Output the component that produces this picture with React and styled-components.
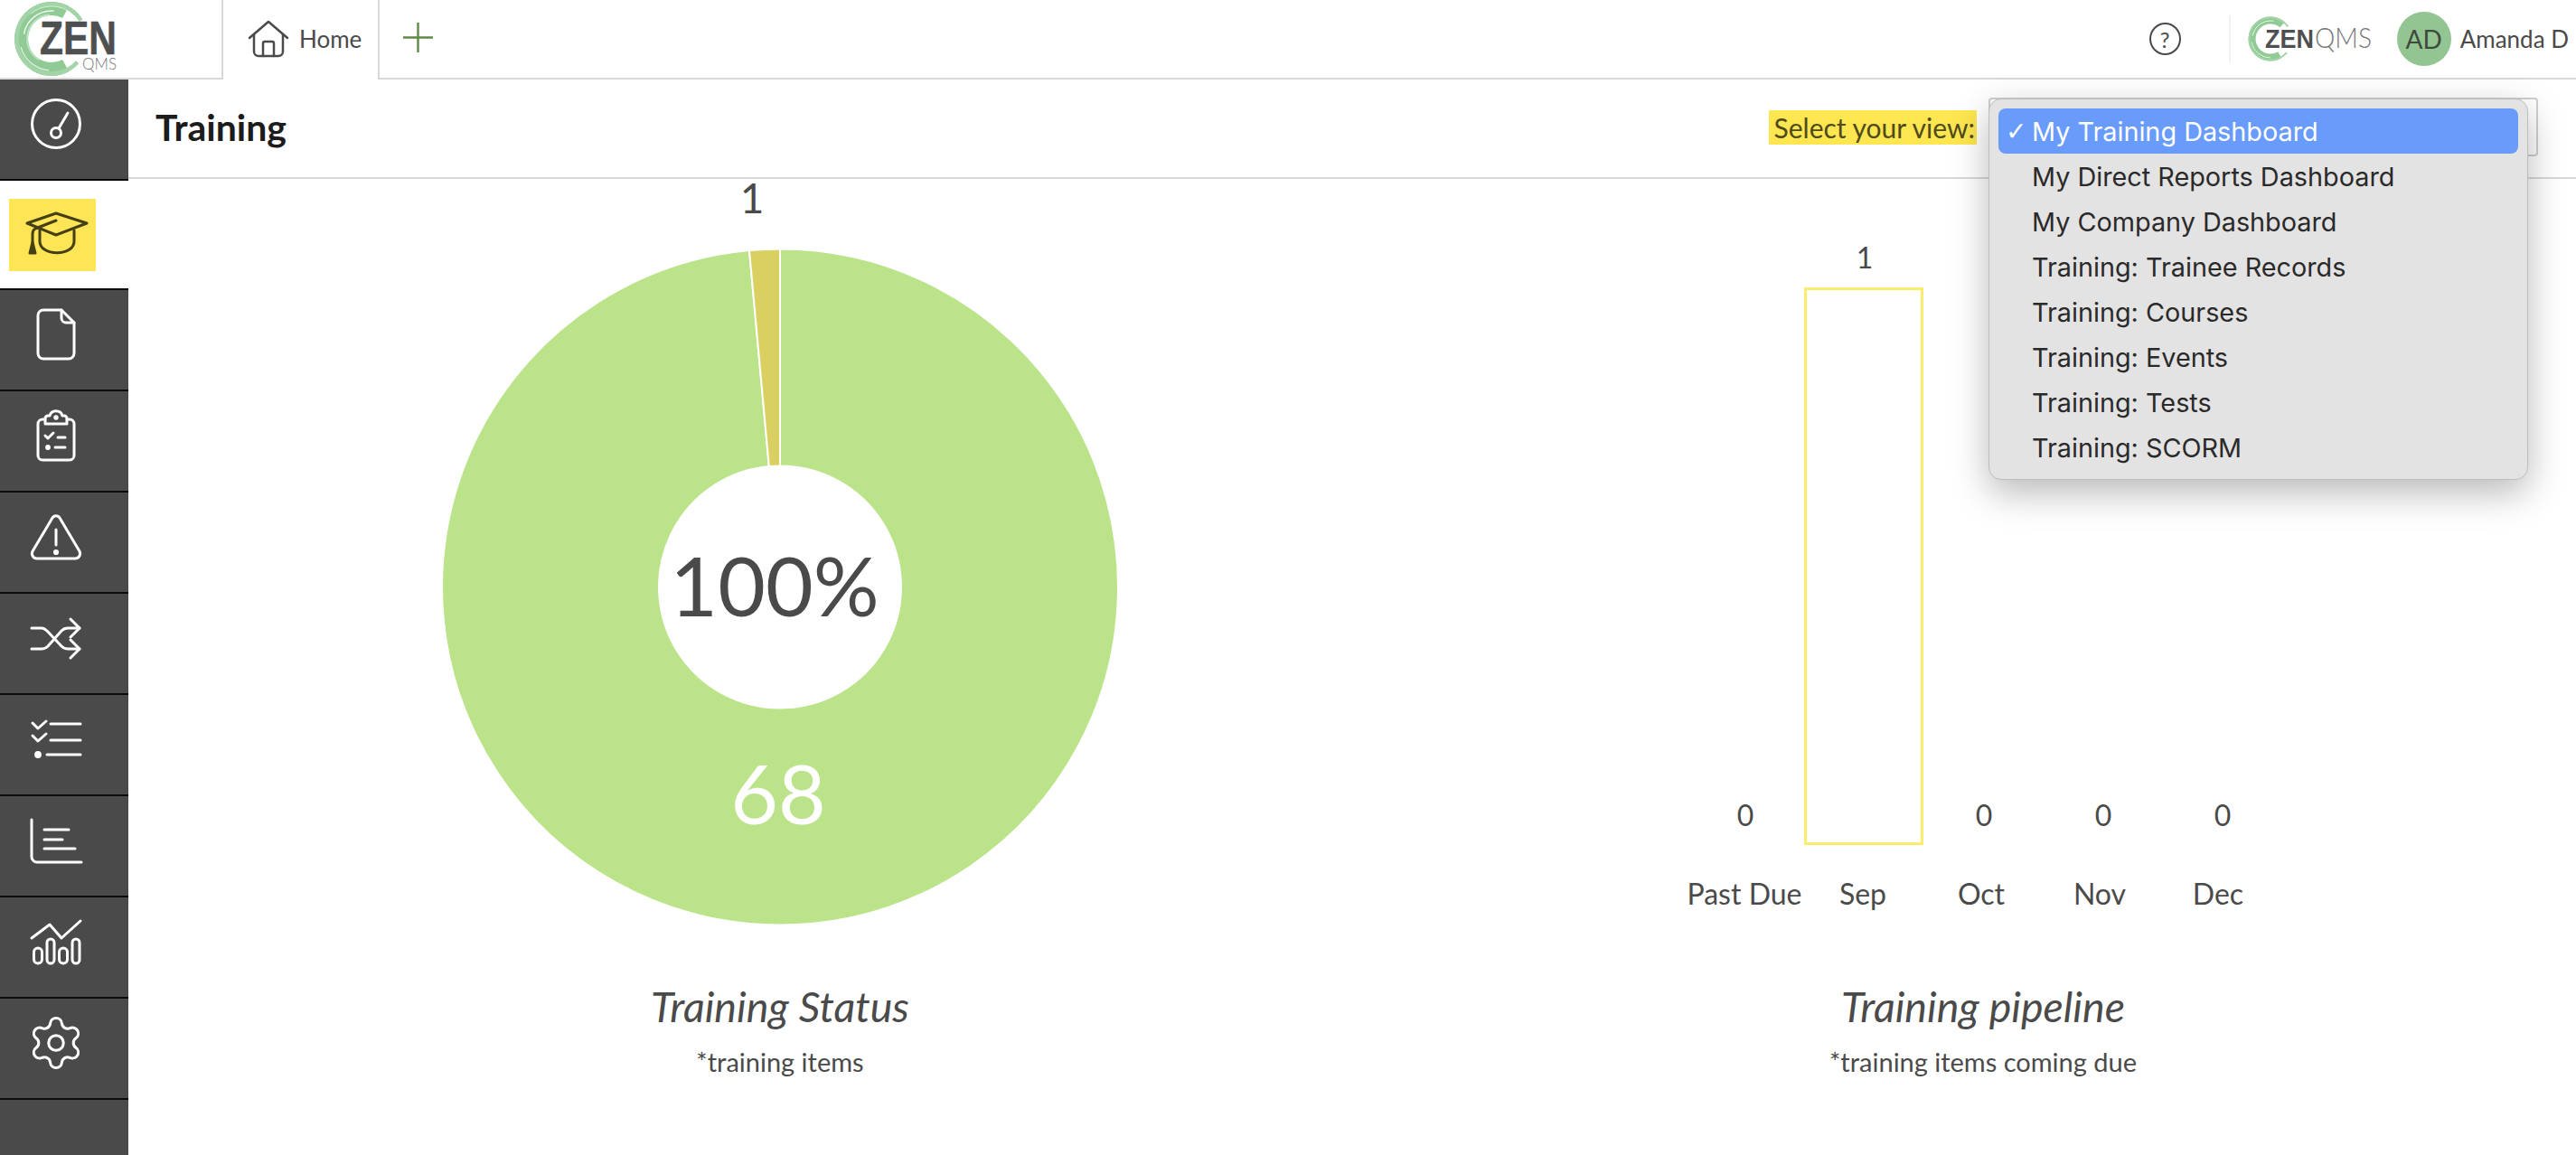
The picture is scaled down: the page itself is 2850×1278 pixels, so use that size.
import styled, { createGlobalStyle } from "styled-components";
import { Settings } from "lucide-react";

const GlobalStyle = createGlobalStyle`
  html, body { margin: 0; padding: 0; background: #fff; }
  body { font-family: "Lato", "Liberation Sans", sans-serif; color: #4a4a4a; overflow: hidden; }
  * { box-sizing: border-box; }
`;

const Page = styled.div`
  width: 2850px;
  height: 1278px;
  display: flex;
  flex-direction: column;
  overflow: hidden;
`;

const Header = styled.header`
  height: 88px;
  display: flex;
  align-items: stretch;
  border-bottom: 2px solid #d8d8d8;
  flex: none;
`;

const Brand = styled.div`
  width: 245px;
  padding: 1px 0 0 14px;
`;

const HomeTab = styled.div`
  width: 175px;
  height: 88px;
  background: #fff;
  border-left: 2px solid #d8d8d8;
  border-right: 2px solid #d8d8d8;
  display: flex;
  align-items: center;
  gap: 11px;
  padding: 0 0 2px 27px;
  font-size: 26px;
  color: #4a4a4a;
`;

const AddTab = styled.div`
  padding: 0 0 3px 26px;
  display: flex;
  align-items: center;
`;

const HeaderRight = styled.div`
  margin-left: auto;
  display: flex;
  align-items: center;
  padding-right: 8px;
`;

const HelpIcon = styled.div`
  width: 35px;
  height: 36px;
  border: 2.5px solid #4a4a4a;
  border-radius: 50%;
  display: flex;
  align-items: center;
  justify-content: center;
  font-size: 24px;
  color: #4a4a4a;
`;

const HeaderDivider = styled.div`
  width: 2px;
  height: 52px;
  background: #f1f1f1;
  margin: 0 18px 0 53px;
`;

const LogoSvg = styled.svg`
  display: block;
  overflow: visible;
`;

const Avatar = styled.div`
  width: 60px;
  height: 60px;
  border-radius: 50%;
  background: #93c592;
  display: flex;
  align-items: center;
  justify-content: center;
  font-size: 28px;
  color: #3f4a3f;
  margin: 0 10px 0 26px;
`;

const UserName = styled.div`
  font-size: 26px;
  color: #4a4a4a;
  white-space: nowrap;
`;

const Body = styled.div`
  flex: 1;
  display: flex;
  min-height: 0;
`;

const Sidebar = styled.nav`
  width: 142px;
  flex: none;
  display: flex;
  flex-direction: column;
  background: #4a4a4a;
`;

const NavCell = styled.div`
  height: ${(p) => (p.$active ? "121px" : "112px")};
  flex: none;
  border-bottom: 2px solid #0c0c0c;
  background: ${(p) => (p.$active ? "#fff" : "#4a4a4a")};
  color: #fff;
  padding: ${(p) => (p.$active ? "20px 0 0 10px" : "13px 0 0 26px")};
`;

const NavFiller = styled.div`
  flex: 1;
`;

const Highlight = styled.div`
  width: 96px;
  height: 80px;
  background: #fde555;
  color: #443f14;
  padding: 2px 0 0 16px;
`;

const NavSvg = styled.svg`
  display: block;
  width: 72px;
  height: 72px;
  fill: none;
  stroke: currentColor;
  stroke-width: 3;
  stroke-linecap: round;
  stroke-linejoin: round;
`;

const GearWrap = styled.div`
  width: 72px;
  height: 72px;
  display: flex;
  align-items: center;
  justify-content: center;
`;

const Main = styled.main`
  flex: 1;
  display: flex;
  flex-direction: column;
  min-width: 0;
`;

const TitleBar = styled.div`
  position: relative;
  height: 110px;
  flex: none;
  border-bottom: 2px solid #d8d8d8;
  display: flex;
  align-items: center;
  padding: 0 42px 3px 30px;
`;

const PageTitle = styled.h1`
  margin: 0;
  font-size: 41px;
  font-weight: 700;
  color: #1c1c1c;
`;

const ViewLabel = styled.span`
  margin-left: auto;
  background: #fde64f;
  color: #4f4a1c;
  font-size: 30px;
  line-height: 38px;
  padding: 0 2px 0 6px;
  white-space: nowrap;
`;

const SelectBox = styled.div`
  width: 608px;
  height: 65px;
  margin: 0 0 1px 13px;
  border: 2px solid #cfcfcf;
  border-radius: 4px;
  background: #fff;
`;

const Menu = styled.ul`
  position: absolute;
  left: 2058px;
  top: 21px;
  width: 597px;
  height: 422px;
  margin: 0;
  padding: 10px;
  list-style: none;
  background: #e3e3e3;
  border: 1px solid #bdbdbd;
  border-radius: 14px;
  box-shadow: 0 14px 40px rgba(0, 0, 0, 0.28);
  font-family: "Inter", "Liberation Sans", sans-serif;
  font-size: 28.8px;
  z-index: 5;
`;

const MenuItem = styled.li`
  height: 50px;
  position: relative;
  display: flex;
  align-items: center;
  padding-left: 37px;
  border-radius: 8px;
  white-space: nowrap;
  background: ${(p) => (p.$selected ? "#689bfa" : "transparent")};
  color: ${(p) => (p.$selected ? "#fff" : "#2a2a2a")};
`;

const MenuCheck = styled.span`
  position: absolute;
  left: 8px;
  font-family: "DejaVu Sans", sans-serif;
  font-weight: 700;
  font-size: 28px;
`;

const Charts = styled.div`
  flex: 1;
  display: grid;
  grid-template-columns: 1442px 1220px;
`;

const ChartPanel = styled.section`
  display: flex;
  flex-direction: column;
  align-items: center;
`;

const DonutSvg = styled.svg`
  display: block;
  width: 800px;
  height: 737px;
  margin-bottom: 148px;
  overflow: visible;
`;

const BarArea = styled.div`
  height: 737px;
  display: grid;
  grid-template-columns: repeat(5, 132px);
  align-items: end;
`;

const BarColumn = styled.div`
  display: flex;
  flex-direction: column;
  align-items: center;
`;

const BarCount = styled.div`
  font-size: 32px;
  line-height: 38px;
  color: #4a4a4a;
  margin: 0 0 14px 2px;
`;

const Bar = styled.div`
  width: 132px;
  height: ${(p) => p.$height}px;
  border: 3px solid #fbec6d;
`;

const MonthRow = styled.div`
  display: grid;
  grid-template-columns: repeat(5, 131px);
  margin: 34px 4px 0 0;
  height: 114px;
`;

const MonthLabel = styled.div`
  font-size: 32px;
  line-height: 40px;
  text-align: center;
  white-space: nowrap;
  color: #4a4a4a;
`;

const ChartTitle = styled.h2`
  margin: 0;
  font-size: 46.5px;
  line-height: 60px;
  font-style: italic;
  font-weight: 400;
  color: #4a4a4a;
`;

const ChartNote = styled.div`
  margin-top: 13px;
  font-size: 29px;
  line-height: 38px;
  color: #4a4a4a;
`;

function Icon({ children }) {
  return <NavSvg viewBox="0 0 72 72">{children}</NavSvg>;
}

const navIcons = [
  <Icon key="gauge">
    <circle cx="36" cy="36" r="26.5" />
    <circle cx="36" cy="46" r="5.5" />
    <path d="M39 41 L49 24" />
  </Icon>,
  <Icon key="cap">
    <path d="M4 25 L36 14 L70 25 L36 38 Z" />
    <path d="M18 32 V45 C18 62 56 62 56 45 V33" />
    <path d="M36 22 L13 31 C11 32 10 34 10 37 V46" />
    <path d="M7 58 L10 46 L13 58 Z" fill="currentColor" />
  </Icon>,
  <Icon key="doc">
    <path d="M42 9 H22 a6 6 0 0 0 -6 6 V57 a6 6 0 0 0 6 6 H50 a6 6 0 0 0 6 -6 V23 Z" />
    <path d="M42 9 V18 a5 5 0 0 0 5 5 H56" />
  </Icon>,
  <Icon key="clipboard">
    <path d="M24 18 H21 a5 5 0 0 0 -5 5 V58 a5 5 0 0 0 5 5 H51 a5 5 0 0 0 5 -5 V23 a5 5 0 0 0 -5 -5 H48" />
    <path d="M24 23 V17 a3 3 0 0 1 3 -3 h2 C31 7 41 7 43 14 h2 a3 3 0 0 1 3 3 V23 Z" />
    <circle cx="36" cy="16" r="1.2" />
    <path d="M24 36 l3 3 l6 -6" />
    <path d="M38 38 H46" />
    <circle cx="27" cy="49" r="1.4" fill="currentColor" />
    <path d="M35 49 H46" />
  </Icon>,
  <Icon key="warning">
    <path d="M32 15 L10 52 a5.5 5.5 0 0 0 5 8 H57 a5.5 5.5 0 0 0 5 -8 L40 15 a4.6 4.6 0 0 0 -8 0 Z" />
    <path d="M36 28 V45" />
    <circle cx="36" cy="53" r="1.6" fill="currentColor" />
  </Icon>,
  <Icon key="shuffle">
    <path d="M9 25 h11 c3 0 5 2 7 4 L42 45 c2 2 4 3 7 3 H62" />
    <path d="M52 38 L62 48 L52 58" />
    <path d="M9 48 H20 c3 0 5 -1 7 -3 L42 28 c2 -2 4 -3 7 -3 H62" />
    <path d="M52 15 L62 25 L52 35" />
  </Icon>,
  <Icon key="checklist">
    <path d="M10 18 l6 6 l9 -8" />
    <path d="M30 19 H63" />
    <path d="M10 32 l6 6 l9 -8" />
    <path d="M30 37 H63" />
    <circle cx="16" cy="53" r="2.4" fill="currentColor" />
    <path d="M26 53 H63" />
  </Icon>,
  <Icon key="bars">
    <path d="M9 13 V54 a6 6 0 0 0 6 6 H64" />
    <path d="M23 24 H50" />
    <path d="M23 35 H43" />
    <path d="M23 45 H57" />
  </Icon>,
  <Icon key="trend">
    <path d="M9 32 L29 17 L42 32 L63 13" />
    <rect x="11.5" y="43" width="9" height="17" rx="4.5" />
    <rect x="26" y="33" width="8" height="27" rx="4" />
    <rect x="39.5" y="43" width="9" height="17" rx="4.5" />
    <rect x="54" y="33" width="8" height="27" rx="4" />
  </Icon>,
  <GearWrap key="gear">
    <Settings size={66} strokeWidth={1.1} />
  </GearWrap>,
];

// arc going counter-clockwise from a1 round the left side to a2, angles in degrees
function ringArc(cx, cy, r, a1, a2) {
  const pt = (deg) => {
    const a = (deg * Math.PI) / 180;
    return `${(cx + r * Math.cos(a)).toFixed(1)} ${(cy + r * Math.sin(a)).toFixed(1)}`;
  };
  const large = ((a1 - a2 + 360) % 360) > 180 ? 1 : 0;
  return `M${pt(a1)} A${r} ${r} 0 ${large} 0 ${pt(a2)}`;
}

function BigLogo() {
  const c = [43, 42];
  return (
    <LogoSvg width="130" height="84" viewBox="0 0 130 84" fill="none">
      <path d={ringArc(c[0], c[1], 33.5, -62, 62)} stroke="#90cb95" strokeWidth="15" />
      <path d={ringArc(c[0], c[1], 38.5, -32, 42)} stroke="#a3d4a7" strokeWidth="4.5" />
      <path d={ringArc(c[0], c[1], 27, -95, 120)} stroke="#c0e2c3" strokeWidth="1.6" />
      <path d={ringArc(c[0], c[1], 31, -85, -170)} stroke="#fff" strokeWidth="1.4" opacity="0.85" />
      <path d={ringArc(c[0], c[1], 35, 165, 95)} stroke="#fff" strokeWidth="1.2" opacity="0.75" />
      <path d={ringArc(c[0], c[1], 36, -60, -130)} stroke="#fff" strokeWidth="1" opacity="0.6" />
      <text x="30" y="59" fontFamily="Liberation Sans" fontWeight="700" fontSize="51" fill="#4d4f50" stroke="#4d4f50" strokeWidth="0.6" textLength="85" lengthAdjust="spacingAndGlyphs">ZEN</text>
      <text x="77" y="76" fontFamily="Lato" fontWeight="300" fontSize="18" fill="#777" textLength="38" lengthAdjust="spacingAndGlyphs">QMS</text>
    </LogoSvg>
  );
}

function SmallLogo() {
  const c = [26, 27];
  return (
    <LogoSvg width="140" height="54" viewBox="0 0 140 54" fill="none">
      <path d={ringArc(c[0], c[1], 20.5, -50, 60)} stroke="#90cb95" strokeWidth="8" />
      <path d={ringArc(c[0], c[1], 23.5, -35, 40)} stroke="#a3d4a7" strokeWidth="2" />
      <path d={ringArc(c[0], c[1], 20, -80, -170)} stroke="#fff" strokeWidth="1" opacity="0.8" />
      <path d={ringArc(c[0], c[1], 21, 170, 90)} stroke="#fff" strokeWidth="1" opacity="0.7" />
      <text x="20" y="37" fontFamily="Liberation Sans" fontWeight="700" fontSize="29" fill="#4d4f50" textLength="54" lengthAdjust="spacingAndGlyphs">ZEN</text>
      <text x="75" y="37" fontFamily="Lato" fontWeight="300" fontSize="31" fill="#777" textLength="63" lengthAdjust="spacingAndGlyphs">QMS</text>
    </LogoSvg>
  );
}

function wedgePath(cx, cy, outer, inner, startDeg, endDeg) {
  const pt = (r, deg) => {
    const a = ((deg - 90) * Math.PI) / 180;
    return `${cx + r * Math.cos(a)} ${cy + r * Math.sin(a)}`;
  };
  const large = endDeg - startDeg > 180 ? 1 : 0;
  return `M${pt(outer, startDeg)} A${outer} ${outer} 0 ${large} 1 ${pt(outer, endDeg)} L${pt(inner, endDeg)} A${inner} ${inner} 0 ${large} 0 ${pt(inner, startDeg)} Z`;
}

function Donut() {
  const cx = 400;
  const cy = 451.5;
  const split = 360 - 360 / 69;
  return (
    <DonutSvg viewBox="0 0 800 737">
      <path d={wedgePath(cx, cy, 374, 134, 0, split)} fill="#bbe389" stroke="#fff" strokeWidth="2" />
      <path d={wedgePath(cx, cy, 374, 134, split, 360)} fill="#dad062" stroke="#fff" strokeWidth="2" />
      <text x="369" y="38" textAnchor="middle" fontSize="46" fontFamily="Lato" fill="#4a4a4a">1</text>
      <text x="394" y="484" textAnchor="middle" fontSize="91" fontFamily="Lato" fill="#4a4a4a">100%</text>
      <text x="398" y="714" textAnchor="middle" fontSize="91" fontFamily="Lato" fill="#fff">68</text>
    </DonutSvg>
  );
}

const pipeline = [
  { month: "Past Due", count: 0 },
  { month: "Sep", count: 1 },
  { month: "Oct", count: 0 },
  { month: "Nov", count: 0 },
  { month: "Dec", count: 0 },
];

const views = [
  "My Training Dashboard",
  "My Direct Reports Dashboard",
  "My Company Dashboard",
  "Training: Trainee Records",
  "Training: Courses",
  "Training: Events",
  "Training: Tests",
  "Training: SCORM",
];

export default function App() {
  return (
    <Page>
      <GlobalStyle />
      <Header>
        <Brand>
          <BigLogo />
        </Brand>
        <HomeTab>
          <svg width="46" height="42" viewBox="0 0 46 42" fill="none" stroke="#4a4a4a" strokeWidth="2.5" strokeLinecap="round" strokeLinejoin="round">
            <path d="M2 20 L23 2 L44 20" />
            <path d="M7 16 V35 a5 5 0 0 0 5 5 H34 a5 5 0 0 0 5 -5 V16" />
            <path d="M17 40 V26 a2 2 0 0 1 2 -2 H27 a2 2 0 0 1 2 2 V40" />
          </svg>
          Home
        </HomeTab>
        <AddTab>
          <svg width="33" height="33" viewBox="0 0 33 33" stroke="#5f8a47" strokeWidth="2.4">
            <path d="M16.5 0 V33 M0 16.5 H33" />
          </svg>
        </AddTab>
        <HeaderRight>
          <HelpIcon>?</HelpIcon>
          <HeaderDivider />
          <SmallLogo />
          <Avatar>AD</Avatar>
          <UserName>Amanda D</UserName>
        </HeaderRight>
      </Header>
      <Body>
        <Sidebar>
          {navIcons.map((icon, i) => (
            <NavCell key={i} $active={i === 1}>
              {i === 1 ? <Highlight>{icon}</Highlight> : icon}
            </NavCell>
          ))}
          <NavFiller />
        </Sidebar>
        <Main>
          <TitleBar>
            <PageTitle>Training</PageTitle>
            <ViewLabel>Select your view:</ViewLabel>
            <SelectBox />
            <Menu>
              {views.map((view, i) => (
                <MenuItem key={view} $selected={i === 0}>
                  {i === 0 && <MenuCheck>✓</MenuCheck>}
                  {view}
                </MenuItem>
              ))}
            </Menu>
          </TitleBar>
          <Charts>
            <ChartPanel>
              <Donut />
              <ChartTitle>Training Status</ChartTitle>
              <ChartNote>*training items</ChartNote>
            </ChartPanel>
            <ChartPanel>
              <BarArea>
                {pipeline.map((p) => (
                  <BarColumn key={p.month}>
                    <BarCount>{p.count}</BarCount>
                    {p.count > 0 && <Bar $height={617} />}
                  </BarColumn>
                ))}
              </BarArea>
              <MonthRow>
                {pipeline.map((p) => (
                  <MonthLabel key={p.month}>{p.month}</MonthLabel>
                ))}
              </MonthRow>
              <ChartTitle>Training pipeline</ChartTitle>
              <ChartNote>*training items coming due</ChartNote>
            </ChartPanel>
          </Charts>
        </Main>
      </Body>
    </Page>
  );
}
